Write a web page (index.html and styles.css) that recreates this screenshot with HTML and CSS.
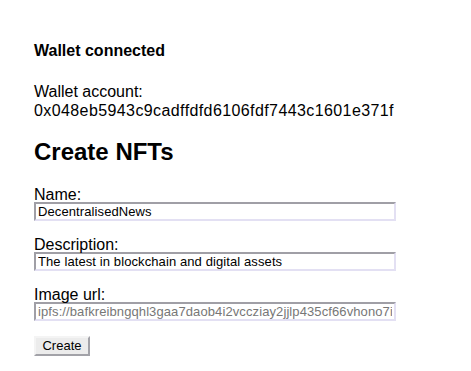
FILE: index.html
```html
<!DOCTYPE html>
<html lang="en">
  <head>
    <meta charset="UTF-8" />
    <meta name="viewport" content="width=device-width, initial-scale=1.0" />
    <title>Create NFTs</title>
    <link rel="stylesheet" href="styles.css">
  </head>
  <body>
    <div class="container">
      <p class="status">Wallet connected</p>
      <p class="account">
        Wallet account:<br />
        <span class="address">0x048eb5943c9cadffdfd6106fdf7443c1601e371f</span>
      </p>

      <h2>Create NFTs</h2>
      <form class="nft-form">
        <label class="field">
          <span class="field-label">Name:</span>
          <input type="text" value="DecentralisedNews" />
        </label>
        <label class="field">
          <span class="field-label">Description:</span>
          <input type="text" value="The latest in blockchain and digital assets" />
        </label>
        <label class="field">
          <span class="field-label">Image url:</span>
          <input type="text" placeholder="ipfs://bafkreibngqhl3gaa7daob4i2vccziay2jjlp435cf66vhono7ifnw4vbie" />
        </label>
        <button type="button" class="create-btn">Create</button>
      </form>
    </div>
  </body>
</html>
```

FILE: styles.css
```css
* {
  padding: 0;
  margin: 0;
  box-sizing: border-box;
}
html,
body {
  font-size: 16px;
  font-family: "Liberation Sans", Arial, sans-serif;
  color: #000;
  background: #fff;
}

.container {
  padding: 42px 34px 0;
}

.status {
  font-weight: bold;
  line-height: 18px;
}

.account {
  margin-top: 22px;
  line-height: 19px;
}

.address {
  letter-spacing: 0.4px;
}

h2 {
  font-size: 24px;
  line-height: 28px;
  margin: 18px 0 20px;
}

.field {
  display: block;
  width: 362px;
  margin-bottom: 15px;
}

.field-label {
  display: block;
  line-height: 17px;
}

.field input {
  display: block;
  width: 362px;
  height: 19px;
  margin-top: -1px;
  padding: 0 2px;
  font-family: "Liberation Sans", Arial, sans-serif;
  font-size: 13px;
  letter-spacing: 0.1px;
  color: #000;
  background: #fff;
  border: 2px solid;
  border-color: #a09fa6 #e3e0f3 #e3e0f3 #a09fa6;
  outline: none;
}

.field input::placeholder {
  color: #777;
}

.create-btn {
  margin-top: -2px;
  width: 56px;
  height: 20px;
  font-family: "Liberation Sans", Arial, sans-serif;
  font-size: 13px;
  background: #ececec;
  border: 2px solid;
  border-color: #f4f4f4 #a2a2a8 #a2a2a8 #f4f4f4;
  color: #000;
}
```
